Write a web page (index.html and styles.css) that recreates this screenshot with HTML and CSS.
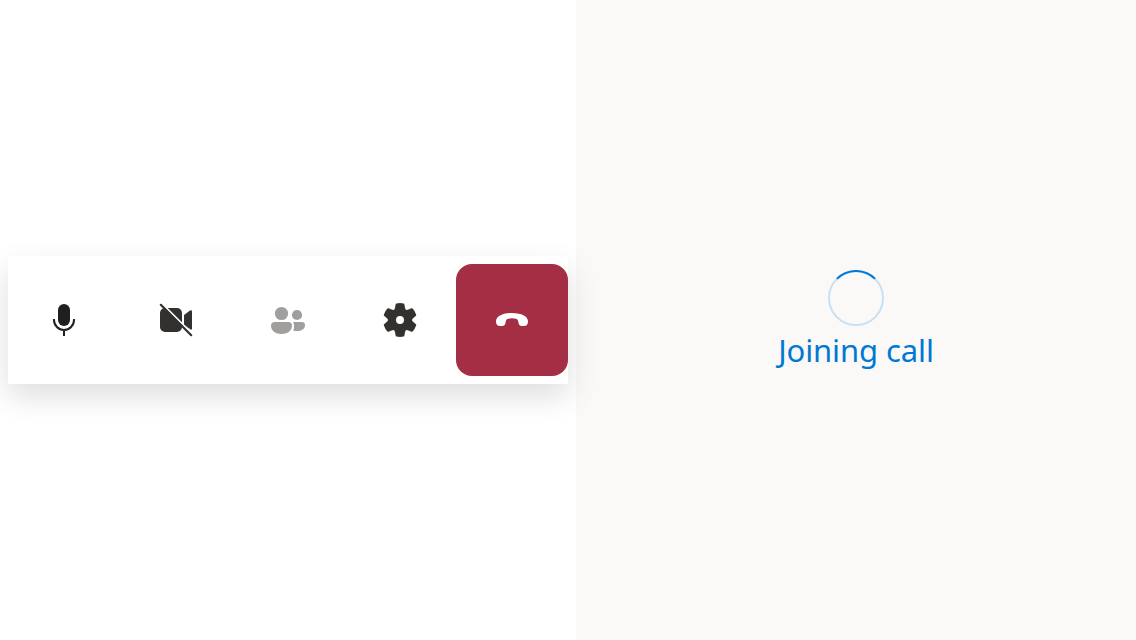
FILE: index.html
```
<!DOCTYPE html>
<html lang="en">
<head>
<meta charset="utf-8">
<title>Joining call</title>
<link rel="stylesheet" href="styles.css">
</head>
<body>
<main class="call">
  <section class="controls">
    <div class="control-bar">
      <button class="control mic" aria-label="Microphone"><svg class="icon" viewBox="0 0 40 40"><rect x="14" y="4" width="12" height="22" rx="6" fill="currentColor"/><path d="M10 19v1a10 10 0 0 0 20 0v-1M20 30v6" fill="none" stroke="currentColor" stroke-width="2"/></svg></button>
      <button class="control" aria-label="Camera off"><svg class="icon" viewBox="0 0 40 40" fill="currentColor"><path d="M9 8H21a5 5 0 0 1 5 5V27a5 5 0 0 1-5 5H9a5 5 0 0 1-5-5V13a5 5 0 0 1 5-5ZM28 15l6-4.500q2-1 2 1v17q0 1.300-1 1.300L28 25Z"/><path class="slash-gap" d="M4 1.800L37 34.800"/><path d="M4.800 4.800L35.200 35.200" stroke="currentColor" stroke-width="2.200" stroke-linecap="round"/></svg></button>
      <button class="control muted" aria-label="People"><svg class="icon" viewBox="0 0 40 40" fill="currentColor"><circle cx="13.500" cy="13.500" r="6.600"/><circle cx="29" cy="15" r="5.100"/><path d="M7 22h13.300q3.700 0 3.700 3.500C24 31 19.500 34 13.500 34S3 31 3 25.500Q3 22 7 22ZM25 22h8.500q3.500 0 3.500 3c0 4-3.500 6-8 6-1.500 0-2.700-.2-3.700-.6 1.100-2 1.200-6-.3-8.400Z"/></svg></button>
      <button class="control" aria-label="Settings"><svg class="icon" viewBox="0 0 20 20" fill="currentColor"><path d="M1.910 7.380A8.500 8.500 0 0 1 3.690 4.300a.5.5 0 0 1 .54-.13l1.920.68a1 1 0 0 0 1.320-.76l.37-2a.5.5 0 0 1 .4-.4 8.530 8.530 0 0 1 3.550 0c.2.040.35.200.38.400l.37 2a1 1 0 0 0 1.320.760l1.920-.68a.5.5 0 0 1 .54.130 8.500 8.500 0 0 1 1.780 3.080c.06.200 0 .4-.15.540l-1.560 1.320a1 1 0 0 0 0 1.520l1.560 1.320a.5.5 0 0 1 .15.540 8.500 8.500 0 0 1-1.780 3.080.5.5 0 0 1-.54.130l-1.920-.68a1 1 0 0 0-1.320.760l-.37 2a.5.5 0 0 1-.38.400 8.530 8.530 0 0 1-3.560 0 .5.5 0 0 1-.39-.4l-.37-2a1 1 0 0 0-1.320-.760l-1.920.680a.5.5 0 0 1-.54-.13 8.500 8.500 0 0 1-1.780-3.080.5.5 0 0 1 .15-.54l1.560-1.320a1 1 0 0 0 0-1.520L2.060 7.920a.5.5 0 0 1-.15-.54ZM8 10a2 2 0 1 0 4 0 2 2 0 0 0-4 0Z"/></svg></button>
      <button class="control leave" aria-label="Leave"><svg class="icon" viewBox="0 0 40 40" fill="currentColor"><path d="M4 21.500C4 16.500 10 13 20 13s16 3.500 16 8.500c0 3-1.500 4.500-4 4.500h-2c-2.200 0-3-1-3.500-3.200l-.5-2c-.3-1.200-1-1.800-2-2q-4-1-8 0c-1 .2-1.700.8-2 2l-.5 2C13 25 12.200 26 10 26H8c-2.500 0-4-1.500-4-4.500Z"/></svg></button>
    </div>
  </section>
  <section class="status">
    <svg class="spinner" viewBox="0 0 56 56"><circle cx="28" cy="28" r="27"/><path d="M8.900 8.900A27 27 0 0 1 47.100 8.900"/></svg>
    <div class="label">Joining call</div>
  </section>
</main>
</body>
</html>
```
FILE: styles.css
```
* { box-sizing: border-box; }
body { margin: 0; background: #fff; font-family: "Segoe UI", "Noto Sans", "Open Sans", sans-serif; }
.call { display: flex; height: 640px; overflow: hidden; }
.controls { width: 576px; padding: 0 8px; display: flex; align-items: center; position: relative; z-index: 1; }
.control-bar { width: 560px; height: 128px; padding: 8px 0; display: flex; background: #fff; box-shadow: 0 12.8px 28.8px rgba(0,0,0,.132); }
.control { width: 112px; height: 112px; padding: 0; border: 0; background: transparent; color: #323130; display: flex; align-items: center; justify-content: center; }
.icon { width: 40px; height: 40px; display: block; }
.slash-gap { stroke: #fff; stroke-width: 2; }
.mic { color: #201f1e; }
.muted { color: #a19f9d; }
.leave { background: #a42e43; color: #fff; border-radius: 16px; }
.status { width: 560px; background: #faf9f8; display: flex; flex-direction: column; align-items: center; justify-content: center; }
.spinner { width: 56px; height: 56px; fill: none; stroke: #c7e0f4; stroke-width: 2; }
.spinner path { stroke: #0078d4; }
.label { margin-top: 5px; padding-bottom: 1px; font-size: 31px; font-weight: 400; line-height: 38px; letter-spacing: -.1px; color: #0078d4; white-space: nowrap; }
```
